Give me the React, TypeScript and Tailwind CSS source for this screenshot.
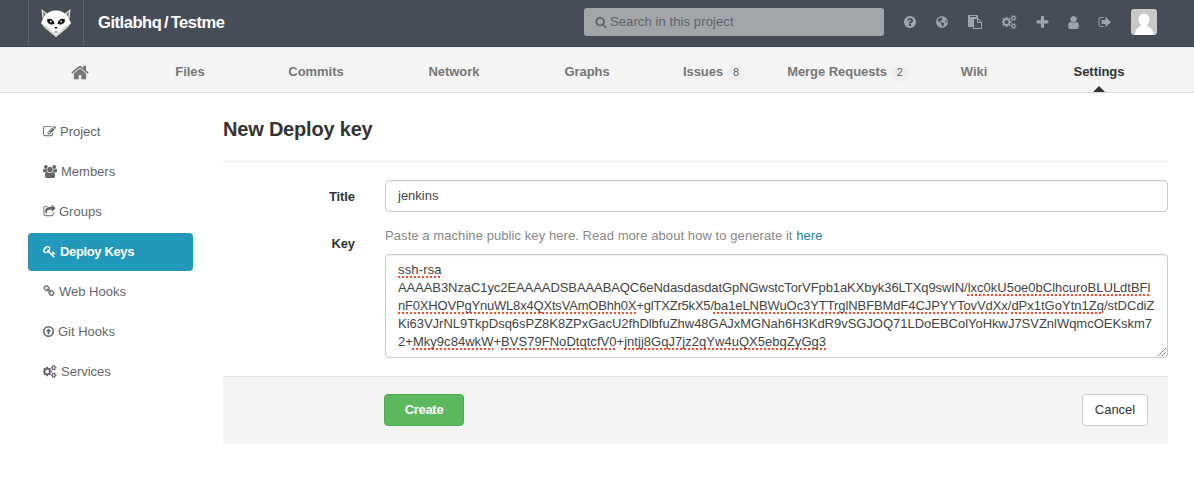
import type { ReactNode } from "react";
import { FaGlobeAmericas } from "react-icons/fa";

const paths = {
  home: "M1408 992v480q0 26-19 45t-45 19h-384v-384h-256v384h-384q-26 0-45-19t-19-45v-480q0-1 .5-3t.5-3l575-474 575 474q1 2 1 6zm223-69l-62 74q-8 9-21 11h-3q-13 0-21-7l-692-577-692 577q-12 8-24 7-13-2-21-11l-62-74q-8-10-7-23.5t11-21.5l719-599q32-26 76-26t76 26l244 204v-195q0-14 9-23t23-9h192q14 0 23 9t9 23v408l219 182q10 8 11 21.5t-7 23.5z",
  key: "M832 512q0-80-56-136t-136-56-136 56-56 136q0 42 19 83-41-19-83-19-80 0-136 56t-56 136 56 136 136 56 136-56 56-136q0-42-19-83 41 19 83 19 80 0 136-56t56-136zm851 704q0 17-49 66t-66 49q-9 0-28.5-16t-36.5-33-38.5-40-24.5-26l-96 96 220 220q28 28 28 68 0 42-39 81t-81 39q-40 0-68-28l-671-671q-176 131-365 131-163 0-265.5-102.5t-102.5-265.5q0-160 95-313t248-248 313-95q163 0 265.5 102.5t102.5 265.5q0 189-131 365l355 355 96-96q-3-3-26-24.5t-40-38.5-33-36.5-16-28.5q0-17 49-66t66-49q13 0 23 10 6 6 46 44.5t82 79.5 86.5 86 73 78 28.5 41z",
  edit: "M888 1184l116-116-152-152-116 116v56h96v96h56zm440-720q-16-16-33 1l-350 350q-17 17-1 33t33-1l350-350q17-17 1-33zm80 594v190q0 119-84.5 203.5t-203.5 84.5h-832q-119 0-203.5-84.5t-84.5-203.5v-832q0-119 84.5-203.5t203.5-84.5h832q63 0 117 25 15 7 18 23 3 17-9 29l-49 49q-14 14-32 8-23-6-45-6h-832q-66 0-113 47t-47 113v832q0 66 47 113t113 47h832q66 0 113-47t47-113v-126q0-13 9-22l64-64q15-15 35-7t20 29zm-96-738l288 288-672 672h-288v-288zm444 132l-92 92-288-288 92-92q28-28 68-28t68 28l152 152q28 28 28 68t-28 68z",
  share: "M1472 989v259q0 119-84.5 203.5t-203.5 84.5h-832q-119 0-203.5-84.5t-84.5-203.5v-832q0-119 84.5-203.5t203.5-84.5h255q13 0 22.5 9.5t9.5 22.5q0 27-26 32-77 26-133 60-10 4-16 4h-112q-66 0-113 47t-47 113v832q0 66 47 113t113 47h832q66 0 113-47t47-113v-214q0-19 18-29 28-13 54-37 16-16 35-8 21 9 21 29zm237-496l-384 384q-18 19-45 19-12 0-25-5-39-17-39-59v-192h-160q-323 0-438 131-119 137-74 473 3 23-20 34-8 2-12 2-16 0-26-13-10-14-21-31t-39.5-68.5-49.5-99.5-38.5-114-17.5-122q0-49 3.5-91t14-90 28-88 47-81.5 68.5-74 94.5-61.5 124.5-48.5 159.5-30.5 196.5-11h160v-192q0-42 39-59 13-5 25-5 26 0 45 19l384 384q19 19 19 45t-19 45z",
  link: "M1520 1216q0-40-28-68l-208-208q-28-28-68-28-42 0-72 32 3 3 19 18.5t21.5 21.5 15 19 13 25.5 3.5 27.5q0 40-28 68t-68 28q-15 0-27.5-3.5t-25.5-13-19-15-21.5-21.5-18.5-19q-33 31-33 73 0 40 28 68l206 207q27 27 68 27 40 0 68-26l147-146q28-28 28-67zm-703-705q0-40-28-68l-206-207q-28-28-68-28-39 0-68 27l-147 146q-28 28-28 67 0 40 28 68l208 208q27 27 68 27 42 0 72-31-3-3-19-18.5t-21.5-21.5-15-19-13-25.5-3.5-27.5q0-40 28-68t68-28q15 0 27.5 3.5t25.5 13 19 15 21.5 21.5 18.5 19q33-31 33-73zm895 705q0 120-85 203l-147 146q-83 83-203 83-121 0-204-85l-206-207q-83-83-83-203 0-123 88-209l-88-88q-86 88-208 88-120 0-204-84l-208-208q-84-84-84-204t85-203l147-146q83-83 203-83 121 0 204 85l206 207q83 83 83 203 0 123-88 209l88 88q86-88 208-88 120 0 204 84l208 208q84 84 84 204z",
  cogs: "M832 896q0-106-75-181t-181-75-181 75-75 181 75 181 181 75 181-75 75-181zm768 512q0-52-38-90t-90-38-90 38-38 90q0 53 37.5 90.5t90.5 37.5 90.5-37.5 37.5-90.5zm0-1024q0-52-38-90t-90-38-90 38-38 90q0 53 37.5 90.5t90.5 37.5 90.5-37.5 37.5-90.5zm-384 421v185q0 10-7 19.5t-16 10.5l-155 24q-11 35-32 76 34 48 90 115 7 11 7 20 0 12-7 19-23 30-82.5 89.5t-78.5 59.5q-11 0-21-7l-115-90q-37 19-77 31-11 108-23 155-7 24-30 24h-186q-11 0-20-7.5t-10-17.5l-23-153q-34-10-75-31l-118 89q-7 7-20 7-11 0-21-8-144-133-144-160 0-9 7-19 10-14 41-53t47-61q-23-44-35-82l-152-24q-10-1-17-9.5t-7-19.5v-185q0-10 7-19.5t16-10.5l155-24q11-35 32-76-34-48-90-115-7-11-7-20 0-12 7-20 22-30 82-89t79-59q11 0 21 7l115 90q34-18 77-32 11-108 23-154 7-24 30-24h186q11 0 20 7.5t10 17.5l23 153q34 10 75 31l118-89q8-7 20-7 11 0 21 8 144 133 144 160 0 8-7 19-12 16-42 54t-45 60q23 48 34 82l152 23q10 2 17 10.5t7 19.5zm640 533v140q0 16-149 31-12 27-30 52 51 113 51 138 0 4-4 7-122 71-124 71-8 0-46-47t-52-68q-20 2-30 2t-30-2q-14 21-52 68t-46 47q-2 0-124-71-4-3-4-7 0-25 51-138-18-25-30-52-149-15-149-31v-140q0-16 149-31 13-29 30-52-51-113-51-138 0-4 4-7 4-2 35-20t59-34 30-16q8 0 46 46.5t52 67.5q20-2 30-2t30 2q51-71 92-112l6-2q4 0 124 70 4 3 4 7 0 25-51 138 17 23 30 52 149 15 149 31zm0-1024v140q0 16-149 31-12 27-30 52 51 113 51 138 0 4-4 7-122 71-124 71-8 0-46-47t-52-68q-20 2-30 2t-30-2q-14 21-52 68t-46 47q-2 0-124-71-4-3-4-7 0-25 51-138-18-25-30-52-149-15-149-31v-140q0-16 149-31 13-29 30-52-51-113-51-138 0-4 4-7 4-2 35-20t59-34 30-16q8 0 46 46.5t52 67.5q20-2 30-2t30 2q51-71 92-112l6-2q4 0 124 70 4 3 4 7 0 25-51 138 17 23 30 52 149 15 149 31z",
  users: "M593 896q-162 5-265 128h-134q-82 0-138-40.5t-56-118.5q0-353 124-353 6 0 43.5 21t97.5 42.5 119 21.5q67 0 133-23-5 37-5 66 0 159 93 256zm1071 637q0 120-73 189.5t-194 69.5h-874q-121 0-194-69.5t-73-189.5q0-53 3.5-103.5t14-109 26.5-108.5 43-97.5 62-81 85.5-53.5 111.5-20q10 0 43 21.5t73 48 107 48 135 21.5 135-21.5 107-48 73-48 43-21.5q61 0 111.5 20t85.5 53.5 62 81 43 97.5 26.5 108.5 14 109 3.5 103.5zm-1024-1277q0 106-75 181t-181 75-181-75-75-181 75-181 181-75 181 75 75 181zm704 384q0 159-112.5 271.5t-271.5 112.5-271.5-112.5-112.5-271.5 112.5-271.5 271.5-112.5 271.5 112.5 112.5 271.5zm576 225q0 78-56 118.5t-138 40.5h-134q-103-123-265-128 93-97 93-256 0-29-5-66 66 23 133 23 59 0 119-21.5t97.5-42.5 43.5-21q124 0 124 353zm-128-609q0 106-75 181t-181 75-181-75-75-181 75-181 181-75 181 75 75 181z",
  question: "M1024 1376v-192q0-14-9-23t-23-9h-192q-14 0-23 9t-9 23v192q0 14 9 23t23 9h192q14 0 23-9t9-23zm256-672q0-88-55.5-163t-138.5-116-170-41q-243 0-371 213-15 24 8 42l132 100q7 6 19 6 16 0 25-12 53-68 86-92 34-24 86-24 48 0 85.5 26t37.5 59q0 38-20 61t-68 45q-63 28-115.5 86.5t-52.5 125.5v36q0 14 9 23t23 9h192q14 0 23-9t9-23q0-19 21.5-49.5t54.5-49.5q32-18 49-28.5t46-35 44.5-48 28-60.5 12.5-81zm384 192q0 209-103 385.5t-279.5 279.5-385.5 103-385.5-103-279.5-279.5-103-385.5 103-385.5 279.5-279.5 385.5-103 385.5 103 279.5 279.5 103 385.5z",
  paste: "M768 1664h896v-640h-416q-40 0-68-28t-28-68v-416h-384v1152zm256-1440v-64q0-13-9.5-22.5t-22.5-9.5h-704q-13 0-22.5 9.5t-9.5 22.5v64q0 13 9.5 22.5t22.5 9.5h704q13 0 22.5-9.5t9.5-22.5zm256 672h299l-299-299v299zm512 128v672q0 40-28 68t-68 28h-960q-40 0-68-28t-28-68v-160h-544q-40 0-68-28t-28-68v-1344q0-40 28-68t68-28h1088q40 0 68 28t28 68v328q21 13 36 28l408 408q28 28 48 76t20 88z",
  plus: "M1600 736v192q0 40-28 68t-68 28h-416v416q0 40-28 68t-68 28h-192q-40 0-68-28t-28-68v-416h-416q-40 0-68-28t-28-68v-192q0-40 28-68t68-28h416v-416q0-40 28-68t68-28h192q40 0 68 28t28 68v416h416q40 0 68 28t28 68z",
  user: "M1536 1399q0 109-62.5 187t-150.5 78h-854q-88 0-150.5-78t-62.5-187q0-85 8.5-160.5t31.5-152 58.5-131 94-89 134.5-34.5q131 128 313 128t313-128q76 0 134.5 34.5t94 89 58.5 131 31.5 152 8.5 160.5zm-256-887q0 159-112.5 271.5t-271.5 112.5-271.5-112.5-112.5-271.5 112.5-271.5 271.5-112.5 271.5 112.5 112.5 271.5z",
  signOut: "M704 1440q0 4 1 20t.5 26.5-3 23.5-10 19.5-20.5 6.5h-320q-119 0-203.5-84.5t-84.5-203.5v-704q0-119 84.5-203.5t203.5-84.5h320q13 0 22.5 9.5t9.5 22.5q0 4 1 20t.5 26.5-3 23.5-10 19.5-20.5 6.5h-320q-66 0-113 47t-47 113v704q0 66 47 113t113 47h312l11.5 1 11.5 3 8 5.5 7 9 2 13.5zm928-544q0 26-19 45l-544 544q-19 19-45 19t-45-19-19-45v-288h-448q-26 0-45-19t-19-45v-384q0-26 19-45t45-19h448v-288q0-26 19-45t45-19 45 19l544 544q19 19 19 45z",
  search: "M1216 832q0-185-131.5-316.5t-316.5-131.5-316.5 131.5-131.5 316.5 131.5 316.5 316.5 131.5 316.5-131.5 131.5-316.5zm512 832q0 52-38 90t-90 38q-54 0-90-38l-343-342q-179 124-399 124-143 0-273.5-55.5t-225-150-150-225-55.5-273.5 55.5-273.5 150-225 225-150 273.5-55.5 273.5 55.5 225 150 150 225 55.5 273.5q0 220-124 399l343 343q37 37 37 90z",
  arrowUp: "M896 128a768 768 0 1 0 0 1536a768 768 0 0 0 0-1536zm0 224a544 544 0 1 1 0 1088a544 544 0 0 1 0-1088zm0 130l-360 364q-20 34 20 50h212v352q0 32 32 32h192q32 0 32-32v-352h212q40-16 20-50z",
};

type IconName = keyof typeof paths;

function Icon({ name, className, box = "0 0 1792 1792" }: { name: IconName; className: string; box?: string }) {
  return (
    <svg viewBox={box} className={`shrink-0 fill-current ${className}`} aria-hidden="true">
      <path d={paths[name]} />
    </svg>
  );
}

function Logo() {
  return (
    <svg viewBox="0 0 32 30" className="h-[30px] w-8" aria-hidden="true">
      <path d="M1.500 1l6 5-5 5zM30.500 1l-6 5 5 5z" fill="#e8e8e8" />
      <path d="M3 3.500l3 3-2.500 2.500zM29 3.500l-3 3 2.500 2.500z" fill="#777" />
      <path d="M16 2.500C11 2.500 7 4.500 4.500 8L1 15l4 5 11 9 11-9 4-5-3.500-7C25 4.500 21 2.500 16 2.500z" fill="#fff" />
      <path d="M1 15l4 5 11 9 11-9 4-5-5 3-7 6.500-3 2.500-3-2.500L6 18z" fill="#cdcdcd" />
      <path d="M7 11.500c3-2 7 0 7.500 4.500-4 1.500-7.500-.5-7.500-4.500zM25 11.500c-3-2-7 0-7.500 4.500 4 1.500 7.500-.5 7.500-4.500z" fill="#111" />
      <path d="M10 12.700h1.700v1.500H10zM20.300 12.700H22v1.500h-1.700z" fill="#eee" />
      <path d="M14.300 19h3.400L16 21.200z" fill="#111" />
      <path d="M14.300 24h3.400" stroke="#555" strokeWidth="1" />
    </svg>
  );
}

function Count({ children }: { children: ReactNode }) {
  return <span className="ml-1 inline-flex h-4 w-[18px] items-center justify-center rounded-full bg-[#eee] text-[11px] font-normal text-[#666]">{children}</span>;
}

const sideItems: { label: string; icon: IconName; iconClass: string; box?: string }[] = [
  { label: "Project", icon: "edit", iconClass: "mr-1 h-[13px] w-[13px]" },
  { label: "Members", icon: "users", iconClass: "mr-1 h-[13px] w-[14px]", box: "0 0 1920 1792" },
  { label: "Groups", icon: "share", iconClass: "mr-[3px] h-[13px] w-[13px]" },
  { label: "Deploy Keys", icon: "key", iconClass: "mr-1 h-[13px] w-[13px]" },
  { label: "Web Hooks", icon: "link", iconClass: "mr-1 h-3 w-3" },
  { label: "Git Hooks", icon: "arrowUp", iconClass: "mr-1 h-[13px] w-[11px]", box: "128 0 1536 1792" },
  { label: "Services", icon: "cogs", iconClass: "mr-1 h-[13px] w-[14px]", box: "0 0 1920 1792" },
];

function Misspelt({ children, className = "" }: { children: ReactNode; className?: string }) {
  return <span className={`underline decoration-[#ff4a2e] decoration-dotted decoration-2 underline-offset-[2px] [text-decoration-skip-ink:none] ${className}`}>{children}</span>;
}

export default function App() {
  return (
    <div className="h-[493px] w-[1194px] overflow-hidden bg-white font-['Liberation_Sans',Arial,sans-serif] text-[13px] leading-5 text-[#333]">
      <header className="flex h-[47px] border-b border-[#373d47] bg-[#474d57]">
        <div className="ml-7 flex w-14 justify-center border-x border-[#5d636d] pt-2">
          <Logo />
        </div>
        <h1 className="ml-[14px] w-[486px] pt-3 text-[16.5px] font-bold leading-5 tracking-[-0.45px] text-white [word-spacing:-1.5px]">Gitlabhq / Testme</h1>
        <div className="mt-2 flex h-7 w-[300px] items-center rounded-[3px] bg-[#a2a5aa] pl-[11px] text-[13px] text-[#5f6267]">
          <Icon name="search" className="mb-px mr-[3px] h-3 w-3" />
          <span className="tracking-[0.1px]">Search in this project</span>
        </div>
        <div className="flex h-11 items-center text-[#a0a4aa]">
          <Icon name="question" className="ml-5 h-[14px] w-3" box="128 0 1536 1792" />
          <FaGlobeAmericas className="ml-5 h-3 w-3" />
          <Icon name="paste" className="ml-5 h-[14px] w-[14px]" />
          <Icon name="cogs" className="ml-5 h-[14px] w-[15px]" box="0 0 1920 1792" />
          <Icon name="plus" className="ml-[18px] h-[15px] w-[15px]" />
          <Icon name="user" className="ml-[16px] h-[15px] w-[15px]" />
          <Icon name="signOut" className="ml-[17px] h-[14px] w-[14px]" />
          <svg viewBox="0 0 26 26" className="ml-[19px] h-[26px] w-[26px] rounded-[3px] bg-[#c8c8c8]" aria-hidden="true">
            <path d="M13 4.500a5.500 5.500 0 0 1 5.500 5.500c0 3-1.500 5-2.500 6 .5 2.500 6 2 7 10H3.500c1-8 6-7.500 6.500-10-1-1-2.500-3-2.500-6A5.500 5.500 0 0 1 13 4.500z" fill="#fff" />
          </svg>
        </div>
      </header>

      <nav className="flex h-[46px] border-b border-[#dcdcdc] bg-[#f4f4f4] font-bold leading-[49px] tracking-[-0.05px] text-[#777]">
        <div className="ml-[33px] flex w-[94px] shrink-0 justify-center pt-4"><Icon name="home" className="h-[19px] w-[18px]" box="0 0 1664 1792" /></div>
        <div className="w-[126px] text-center">Files</div>
        <div className="w-[126px] text-center">Commits</div>
        <div className="w-[150px] text-center">Network</div>
        <div className="w-[116px] text-center">Graphs</div>
        <div className="w-[138px] text-center">Issues<Count>8</Count></div>
        <div className="w-[130px] text-center">Merge Requests<Count>2</Count></div>
        <div className="w-[122px] text-center">Wiki</div>
        <div className="relative w-[128px] text-center text-[#333]">
          Settings
          <span className="absolute bottom-0 left-[58px] h-0 w-0 border-x-[6px] border-b-[6px] border-x-transparent border-b-[#333]" />
        </div>
      </nav>

      <main className="flex">
        <aside className="ml-7 mt-5 flex w-[165px] flex-col gap-[2px]">
          {sideItems.map((item) => (
            <div key={item.label} className={`flex h-[38px] items-center rounded pl-[15px] ${item.label === "Deploy Keys" ? "bg-[#2299bb] font-bold tracking-[-0.36px] text-white" : "text-[#666]"}`}>
              <Icon name={item.icon} className={`mb-0.5 ${item.iconClass}`} box={item.box} />
              <span>{item.label}</span>
            </div>
          ))}
        </aside>

        <section className="ml-[30px] w-[945px]">
          <h2 className="h-[69px] border-b border-[#eee] pt-[22px] text-[20px] font-bold leading-[28px] tracking-[-0.2px] text-[#333]">New Deploy key</h2>
          <div className="mt-[18px] flex">
            <label className="w-[132px] pt-[7px] text-right font-bold tracking-[-0.1px]">Title</label>
            <div className="ml-[30px] h-8 w-[783px] rounded border border-[#ccc] pl-3 pt-[5px] text-[#444] shadow-[inset_0_1px_1px_rgba(0,0,0,0.06)]">jenkins</div>
          </div>
          <div className="mt-[14px] flex">
            <label className="w-[132px] pt-[8px] text-right font-bold tracking-[-0.1px]">Key</label>
            <div className="ml-[30px] w-[783px]">
              <p className="h-7 tracking-[0.075px] text-[#888]">Paste a machine public key here. Read more about how to generate it <a className="text-[#2080a0]">here</a></p>
              <div className="relative h-[104px] whitespace-nowrap rounded border border-[#ccc] pl-3 pt-[6px] leading-[18px] text-[#444] shadow-[inset_0_1px_1px_rgba(0,0,0,0.06)]">
                <div><Misspelt className="tracking-[0.15px]">ssh-rsa</Misspelt></div>
                <div><span className="tracking-[-0.08px]">AAAAB3NzaC1yc2EAAAADSBAAABAQC6eNdasdasdatGpNGwstcTorVFpb1aKXbyk36LTXq9swIN/</span><Misspelt>lxc0kU5oe0bClhcuroBLULdtBFl</Misspelt></div>
                <div><span className="tracking-[-0.19px]"><Misspelt>nF0XHOVPgYnuWL8x4QXtsVAmOBhh0X</Misspelt>+glTXZr5kX5/</span><Misspelt className="tracking-[-0.08px]">ba1eLNBWuOc3YTTrglNBFBMdF4CJPYYTovVdXx</Misspelt>/<Misspelt>dPx1tGoYtn1Zq</Misspelt>/stDCdiZ</div>
                <div className="tracking-[-0.02px]">Ki63VJrNL9TkpDsq6sPZ8K8ZPxGacU2fhDlbfuZhw48GAJxMGNah6H3KdR9vSGJOQ71LDoEBColYoHkwJ7SVZnlWqmcOEKskm7</div>
                <div className="tracking-[0.035px]">2+<Misspelt>Mky9c84wkW</Misspelt>+<Misspelt>BVS79FNoDtqtcfV0</Misspelt>+<Misspelt>jntjj8GqJ7jz2qYw4uQX5ebqZyGg3</Misspelt></div>
                <svg viewBox="0 0 10 10" className="absolute bottom-0 right-0 h-[10px] w-[10px]" aria-hidden="true"><path d="M1 9L9 1M5 9l4-4" stroke="#666" strokeWidth="1" strokeDasharray="2 .5" /></svg>
              </div>
            </div>
          </div>
          <div className="mt-[18px] flex h-[68px] items-start justify-between border-t border-[#e3e3e3] bg-[#f4f4f4] pl-[161px] pr-5 pt-[17px]">
            <button className="h-8 w-20 rounded border border-[#4cae4c] bg-[#5cb85c] font-bold tracking-[-0.3px] text-white">Create</button>
            <button className="h-8 w-[66px] rounded border border-[#ccc] bg-white text-[#333]">Cancel</button>
          </div>
        </section>
      </main>
    </div>
  );
}
